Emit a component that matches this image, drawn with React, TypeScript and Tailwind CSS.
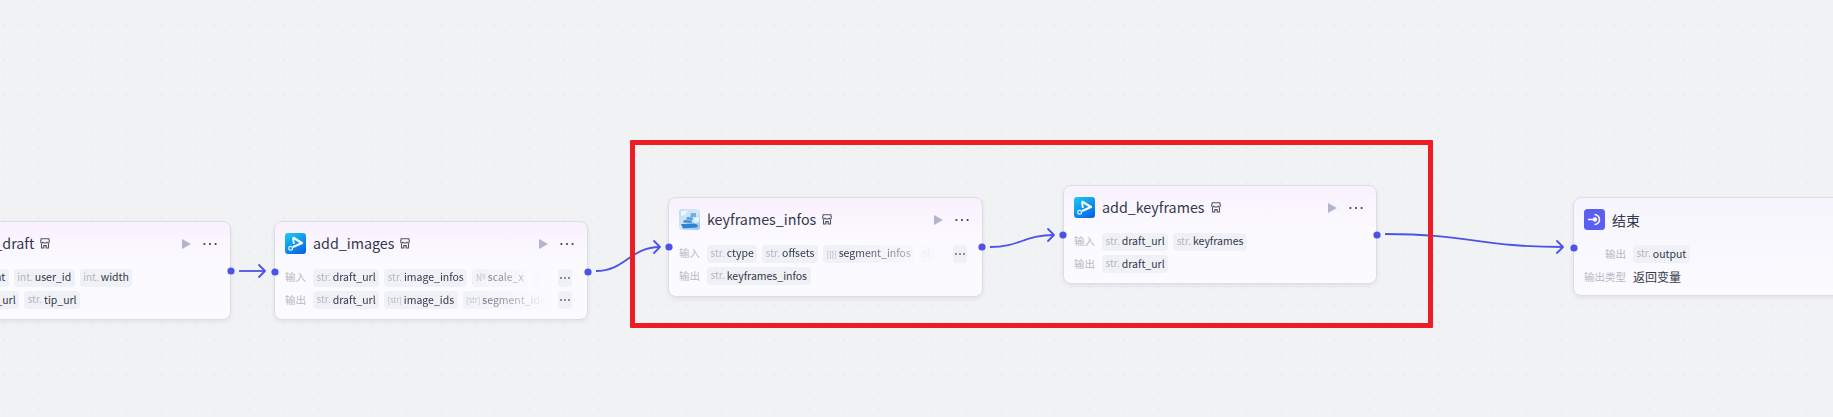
import React from 'react';

const FONT = 'font-["Noto_Sans_CJK_SC","Noto_Sans",sans-serif]';

type TagKind = 'str' | 'int' | 'num' | 'arr' | 'obj';
type Tag = { kind: TagKind; name: string };

const KIND_LABEL: Record<TagKind, string> = {
  str: 'str.',
  int: 'int.',
  num: '№',
  arr: '[str]',
  obj: '[{}]',
};

function VarTag({ kind, name }: Tag) {
  return (
    <div className="flex h-[18px] shrink-0 items-center gap-[2px] rounded-[4px] bg-[#f0f1f7] px-[3.5px]">
      <span className={kind === 'arr' || kind === 'obj' ? 'text-[7.5px] leading-none text-[#b4b6c6]' : 'text-[10px] leading-none text-[#b4b6c6] -translate-y-[1px]'}>
        {KIND_LABEL[kind]}
      </span>
      <span className="text-[10.5px] leading-none text-[#33384a]">{name}</span>
    </div>
  );
}

function PlayIcon() {
  return (
    <svg width="9" height="10" viewBox="0 0 9 10" className="shrink-0">
      <path d="M0 0 L9 5 L0 10 Z" fill="#b3b5cb" />
    </svg>
  );
}

function DotsIcon({ color = '#3c4053', small }: { color?: string; small?: boolean }) {
  if (small) {
    return (
      <svg width="10" height="4" viewBox="0 0 10 4" className="shrink-0">
        <circle cx="1" cy="2" r="0.9" fill={color} />
        <circle cx="5" cy="2" r="0.9" fill={color} />
        <circle cx="9" cy="2" r="0.9" fill={color} />
      </svg>
    );
  }
  return (
    <svg width="14" height="4" viewBox="0 0 14 4" className="shrink-0">
      <circle cx="1.4" cy="2" r="1.1" fill={color} />
      <circle cx="7" cy="2" r="1.1" fill={color} />
      <circle cx="12.6" cy="2" r="1.1" fill={color} />
    </svg>
  );
}

function StoreIcon() {
  return (
    <svg width="10" height="11" viewBox="0 0 10 11" fill="none" stroke="#50535f" strokeWidth="1.1" className="shrink-0">
      <path d="M1.2 0.8 H8.8 L9.4 3.6 C9.4 5.2 7.6 5.4 7 4.3 C6.4 5.4 3.6 5.4 3 4.3 C2.4 5.4 0.6 5.2 0.6 3.6 Z" />
      <path d="M1.5 5.2 V10 H3.8 V7.6 H6.2 V10 H8.5 V5.2" />
    </svg>
  );
}

function CapcutIcon() {
  return (
    <svg width="21" height="21" viewBox="0 0 21 21" className="shrink-0">
      <defs>
        <linearGradient id="capcut" x1="0.2" y1="0" x2="0.8" y2="1">
          <stop offset="0" stopColor="#17c5ee" />
          <stop offset="1" stopColor="#0a63e8" />
        </linearGradient>
      </defs>
      <rect width="21" height="21" rx="3" fill="url(#capcut)" />
      <path d="M8 4.5 L17 10 L8 14" fill="none" stroke="#fff" strokeWidth="2.2" strokeLinejoin="round" />
      <path d="M8 4.5 L8.8 11" stroke="#fff" strokeWidth="1.8" />
      <circle cx="5.6" cy="15.2" r="1.9" fill="none" stroke="#dff3ff" strokeWidth="1.2" />
    </svg>
  );
}

function KeyframesIcon() {
  return (
    <svg width="21" height="21" viewBox="0 0 21 21" className="shrink-0">
      <defs>
        <linearGradient id="kfbg" x1="0" y1="0" x2="1" y2="1">
          <stop offset="0" stopColor="#b7d9f0" />
          <stop offset="0.5" stopColor="#d8e9f6" />
          <stop offset="1" stopColor="#8fc2ec" />
        </linearGradient>
      </defs>
      <rect width="21" height="21" rx="3" fill="url(#kfbg)" />
      <path d="M2 2 L9 1 L6 6 L2 7 Z" fill="#eef6fb" />
      <path d="M12 4 L17 4 L17 8 L11 8 Z" fill="#6fb1e6" />
      <path d="M8 8 L14 8.5 L13.5 11 L7 10.5 Z" fill="#4f9fe0" />
      <path d="M5 11 L13 11.5 L12.5 14 L4 13.5 Z" fill="#3c8fdb" />
      <path d="M2 15 L15 14.5 L19 16 L18 18.5 L4 19.5 Z" fill="#2f80d6" />
      <path d="M15 9 L20 8 V13 L15 13.5 Z" fill="#e8f2fa" />
    </svg>
  );
}

function EndIcon() {
  return (
    <svg width="21" height="21" viewBox="0 0 21 21" className="shrink-0">
      <rect width="21" height="21" rx="3.5" fill="#5a5ff0" />
      <path d="M10.5 5.5 A5 5 0 1 1 10.5 15.5" fill="none" stroke="#fff" strokeWidth="1.5" />
      <circle cx="11" cy="10.5" r="2.2" fill="#fff" />
      <path d="M4.5 10.5 H10" stroke="#fff" strokeWidth="1.5" strokeLinecap="round" />
    </svg>
  );
}

function TagRow({ label, tags, fade }: { label: string; tags: Tag[]; fade?: boolean }) {
  return (
    <div className="flex h-[18px] items-center">
      <span className="w-[28px] shrink-0 text-[10.5px] leading-none text-[#b7b8c4]">{label}</span>
      <div className="relative min-w-0 flex-1">
        <div className={fade ? 'flex w-[232px] gap-[5px] overflow-hidden [mask-image:linear-gradient(to_right,#000_62%,rgba(0,0,0,0.45)_85%,transparent_100%)]' : 'flex gap-[5px]'}>
          {tags.map((t) => (
            <VarTag key={t.name} {...t} />
          ))}
        </div>
        {fade && (
          <div className="absolute right-[5px] top-0 flex h-[18px] w-[14px] items-center justify-center rounded-[4px] bg-[#f0f1f7]">
            <DotsIcon color="#555a6e" small />
          </div>
        )}
      </div>
    </div>
  );
}

type Row = { label: string; tags: Tag[]; fade?: boolean };
type NodeData = { key: string; x: number; y: number; w: number; h: number; title: string; icon: React.ReactNode; rows: Row[] };

const NODES: NodeData[] = [
  {
    key: 'create',
    x: -86,
    y: 221,
    w: 317,
    h: 99,
    title: 'create_draft',
    icon: <CapcutIcon />,
    rows: [
      { label: '输入', tags: [{ kind: 'int', name: 'height' }, { kind: 'int', name: 'user_id' }, { kind: 'int', name: 'width' }] },
      { label: '输出', tags: [{ kind: 'str', name: 'draft_url' }, { kind: 'str', name: 'tip_url' }] },
    ],
  },
  {
    key: 'images',
    x: 274,
    y: 221,
    w: 314,
    h: 99,
    title: 'add_images',
    icon: <CapcutIcon />,
    rows: [
      { label: '输入', fade: true, tags: [{ kind: 'str', name: 'draft_url' }, { kind: 'str', name: 'image_infos' }, { kind: 'num', name: 'scale_x' }, { kind: 'num', name: 'scale_y' }] },
      { label: '输出', fade: true, tags: [{ kind: 'str', name: 'draft_url' }, { kind: 'arr', name: 'image_ids' }, { kind: 'arr', name: 'segment_ids' }] },
    ],
  },
  {
    key: 'infos',
    x: 668,
    y: 197,
    w: 315,
    h: 100,
    title: 'keyframes_infos',
    icon: <KeyframesIcon />,
    rows: [
      { label: '输入', fade: true, tags: [{ kind: 'str', name: 'ctype' }, { kind: 'str', name: 'offsets' }, { kind: 'obj', name: 'segment_infos' }, { kind: 'str', name: 'values' }] },
      { label: '输出', tags: [{ kind: 'str', name: 'keyframes_infos' }] },
    ],
  },
  {
    key: 'keyframes',
    x: 1063,
    y: 185,
    w: 314,
    h: 99,
    title: 'add_keyframes',
    icon: <CapcutIcon />,
    rows: [
      { label: '输入', tags: [{ kind: 'str', name: 'draft_url' }, { kind: 'str', name: 'keyframes' }] },
      { label: '输出', tags: [{ kind: 'str', name: 'draft_url' }] },
    ],
  },
];

const PORTS = [
  [231, 271],
  [275, 272],
  [588, 272],
  [669, 247],
  [982, 247],
  [1063, 235],
  [1377, 235],
  [1574, 248],
];

const EDGES = [
  { d: 'M239 271 H265', head: [265, 271] },
  { d: 'M596 271 C625 271 630 247 660 247', head: [660, 247] },
  { d: 'M990 247 C1020 247 1024 235 1054 235', head: [1054, 235] },
  { d: 'M1385 234 C1470 234 1480 247 1563 247', head: [1563, 247] },
];

function FlowNode({ node }: { node: NodeData }) {
  return (
    <div
      className="absolute flex flex-col gap-[4.5px] rounded-[8px] border border-[#dcdde6] bg-[linear-gradient(to_bottom,#f9f1fd_0%,#fbfaff_45%,#fbfbff_100%)] px-[10px] pt-[11px] shadow-[0_2px_4px_rgba(30,35,60,0.07)]"
      style={{ left: node.x, top: node.y, width: node.w, height: node.h }}
    >
      <div className="mb-[10px] flex h-[21px] items-center">
        {node.icon}
        <span className="ml-[7px] text-[14.3px] leading-none text-[#33384a]">{node.title}</span>
        <span className="ml-[6px]">
          <StoreIcon />
        </span>
        <div className="ml-auto flex items-center gap-[12px] pr-[3px]">
          <PlayIcon />
          <DotsIcon />
        </div>
      </div>
      {node.rows.map((r) => (
        <TagRow key={r.label} {...r} />
      ))}
    </div>
  );
}

function EndNode() {
  return (
    <div
      className="absolute flex flex-col rounded-[8px] border border-[#dcdde6] bg-[linear-gradient(to_bottom,#f6f5fd_0%,#fbfbff_100%)] px-[10px] pt-[11px] shadow-[0_2px_4px_rgba(30,35,60,0.07)]"
      style={{ left: 1573, top: 197, width: 314, height: 99 }}
    >
      <div className="mb-[15px] flex h-[21px] items-center">
        <EndIcon />
        <span className="ml-[7px] text-[14px] leading-none text-[#33384a]">结束</span>
      </div>
      <div className="grid grid-cols-[42px_1fr] items-center gap-x-[7px] gap-y-[5px]">
        <span className="text-right text-[10.5px] leading-none text-[#b7b8c4]">输出</span>
        <div className="flex">
          <VarTag kind="str" name="output" />
        </div>
        <span className="text-right text-[10.5px] leading-none text-[#b7b8c4]">输出类型</span>
        <span className="h-[18px] text-[12px] leading-[18px] text-[#33384a]">返回变量</span>
      </div>
    </div>
  );
}

export default function App() {
  return (
    <div className={`relative h-[417px] w-[1833px] overflow-hidden bg-[#f1f2f4] bg-[radial-gradient(#eaebef_1px,transparent_1px)] bg-[size:17.5px_17.5px] bg-[position:-4.75px_-1.25px] ${FONT}`}>
      {NODES.map((n) => (
        <FlowNode key={n.key} node={n} />
      ))}
      <EndNode />

      <svg width="1833" height="417" className="pointer-events-none absolute left-0 top-0">
        {EDGES.map((e) => (
          <g key={e.d} fill="none" stroke="#4d53e8" strokeWidth="1.8">
            <path d={e.d} />
            <path d={`M${e.head[0] - 6} ${e.head[1] - 6} L${e.head[0]} ${e.head[1]} L${e.head[0] - 6} ${e.head[1] + 6}`} strokeLinecap="round" strokeLinejoin="round" />
          </g>
        ))}
        {PORTS.map(([x, y]) => (
          <circle key={`${x}-${y}`} cx={x} cy={y} r="3.6" fill="#4d53e8" />
        ))}
      </svg>

      {/* annotation frame drawn over the canvas */}
      <div className="absolute left-[630px] top-[140px] h-[188px] w-[803px] rounded-[1px] border-[5px] border-[#ee1c25]" />
    </div>
  );
}
